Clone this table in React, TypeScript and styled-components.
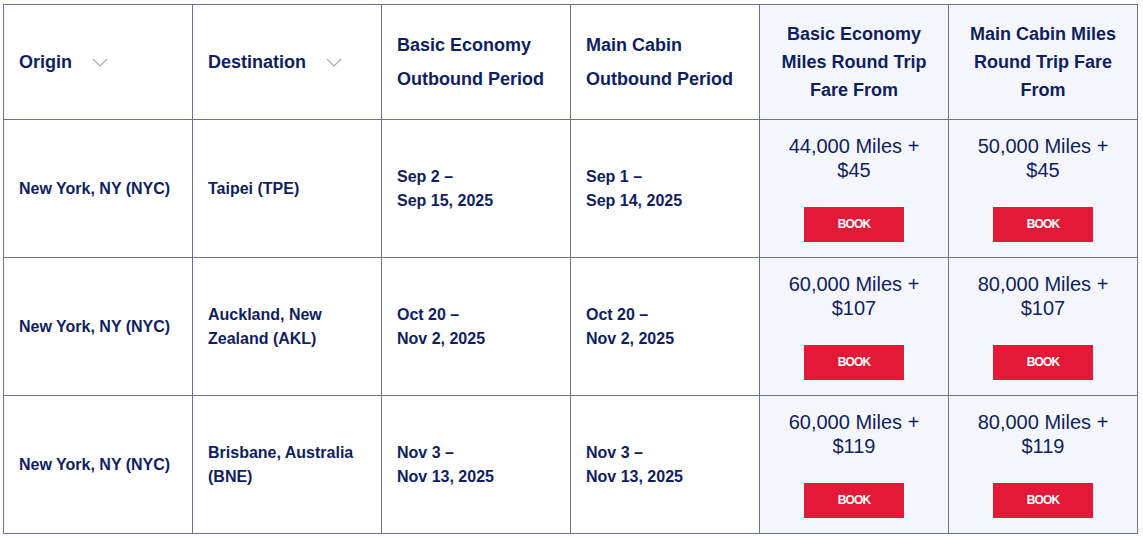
import React from "react";
import styled, { createGlobalStyle } from "styled-components";

const Global = createGlobalStyle`
  html, body { margin: 0; padding: 0; background: #ffffff; }
  body { font-family: "Liberation Sans", Arial, sans-serif; }
`;

const Wrap = styled.div`
  padding: 4px 0 0 3px;
`;

const Table = styled.table`
  border-collapse: collapse;
  table-layout: fixed;
  width: 1135px;
  border: 1px solid #6e7191;
  color: #0f1e62;
`;

const Th = styled.th<{ $shade?: boolean; $center?: boolean; $lh: number }>`
  border: 1px solid #6e7191;
  height: 115px;
  padding: 0 15px;
  box-sizing: border-box;
  font-size: 18px;
  font-weight: 700;
  line-height: ${(p) => p.$lh}px;
  vertical-align: middle;
  text-align: ${(p) => (p.$center ? "center" : "left")};
  background: ${(p) => (p.$shade ? "#f5f6fb" : "#ffffff")};
`;

const HeadLabel = styled.span`
  display: inline-flex;
  align-items: center;
  gap: 20px;
`;

const Td = styled.td<{ $shade?: boolean }>`
  border: 1px solid #6e7191;
  height: 138px;
  padding: 0 15px;
  box-sizing: border-box;
  font-size: 16px;
  font-weight: 700;
  line-height: 24px;
  vertical-align: middle;
  background: ${(p) => (p.$shade ? "#f5f6fb" : "#ffffff")};
`;

const FareBox = styled.div`
  display: flex;
  flex-direction: column;
  align-items: center;
  text-align: center;
  gap: 25px;
  padding-bottom: 2px;
`;

const Miles = styled.div`
  font-size: 20px;
  font-weight: 400;
  line-height: 24px;
  color: #0f1e62;
`;

const BookButton = styled.button`
  width: 100px;
  height: 35px;
  border: none;
  background: #e31937;
  color: #ffffff;
  font-family: "Liberation Sans", Arial, sans-serif;
  font-size: 12px;
  font-weight: 700;
  letter-spacing: -0.9px;
  cursor: pointer;
  padding: 0;
`;

const Chevron = () => (
  <svg width="16" height="9" viewBox="0 0 16 9" fill="none">
    <polyline points="1,1 8,8 15,1" stroke="#a9abb5" strokeWidth="1.2" />
  </svg>
);

type Row = {
  origin: string;
  dest: string;
  be: [string, string];
  mc: [string, string];
  beMiles: [string, string];
  mcMiles: [string, string];
};

const rows: Row[] = [
  {
    origin: "New York, NY (NYC)",
    dest: "Taipei (TPE)",
    be: ["Sep 2 –", "Sep 15, 2025"],
    mc: ["Sep 1 –", "Sep 14, 2025"],
    beMiles: ["44,000 Miles +", "$45"],
    mcMiles: ["50,000 Miles +", "$45"],
  },
  {
    origin: "New York, NY (NYC)",
    dest: "Auckland, New Zealand (AKL)",
    be: ["Oct 20 –", "Nov 2, 2025"],
    mc: ["Oct 20 –", "Nov 2, 2025"],
    beMiles: ["60,000 Miles +", "$107"],
    mcMiles: ["80,000 Miles +", "$107"],
  },
  {
    origin: "New York, NY (NYC)",
    dest: "Brisbane, Australia (BNE)",
    be: ["Nov 3 –", "Nov 13, 2025"],
    mc: ["Nov 3 –", "Nov 13, 2025"],
    beMiles: ["60,000 Miles +", "$119"],
    mcMiles: ["80,000 Miles +", "$119"],
  },
];

const Fare = ({ lines }: { lines: [string, string] }) => (
  <FareBox>
    <Miles>
      {lines[0]}
      <br />
      {lines[1]}
    </Miles>
    <BookButton>BOOK</BookButton>
  </FareBox>
);

export default function App() {
  return (
    <>
      <Global />
      <Wrap>
        <Table>
          <thead>
            <tr>
              <Th $lh={34}>
                <HeadLabel>
                  Origin <Chevron />
                </HeadLabel>
              </Th>
              <Th $lh={34}>
                <HeadLabel>
                  Destination <Chevron />
                </HeadLabel>
              </Th>
              <Th $lh={34}>
                Basic Economy
                <br />
                Outbound Period
              </Th>
              <Th $lh={34}>
                Main Cabin
                <br />
                Outbound Period
              </Th>
              <Th $lh={28} $shade $center>
                Basic Economy Miles Round Trip Fare From
              </Th>
              <Th $lh={28} $shade $center>
                Main Cabin Miles Round Trip Fare From
              </Th>
            </tr>
          </thead>
          <tbody>
            {rows.map((r, i) => (
              <tr key={i}>
                <Td>{r.origin}</Td>
                <Td>{r.dest}</Td>
                <Td>
                  {r.be[0]}
                  <br />
                  {r.be[1]}
                </Td>
                <Td>
                  {r.mc[0]}
                  <br />
                  {r.mc[1]}
                </Td>
                <Td $shade>
                  <Fare lines={r.beMiles} />
                </Td>
                <Td $shade>
                  <Fare lines={r.mcMiles} />
                </Td>
              </tr>
            ))}
          </tbody>
        </Table>
      </Wrap>
    </>
  );
}
